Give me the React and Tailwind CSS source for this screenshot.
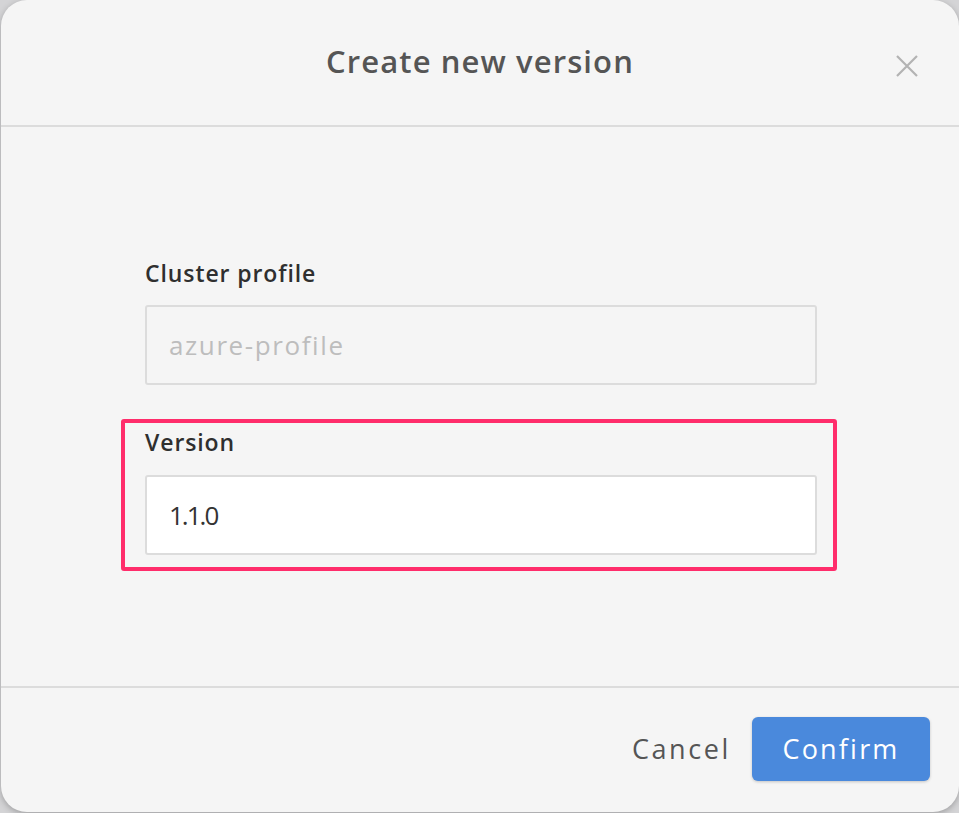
import React from "react";

export default function App() {
  return (
    <div
      className="w-[959px] h-[813px] bg-[#d4d4d6] overflow-hidden"
      style={{ fontFamily: '"Open Sans", "Noto Sans", sans-serif' }}
    >
      <div className="w-[958px] h-[812px] ml-[1px] bg-[#f5f5f5] rounded-[26px] shadow-[0_2px_6px_rgba(0,0,0,0.25)] flex flex-col overflow-hidden">
        {/* Header */}
        <div className="relative h-[127px] shrink-0 flex items-center justify-center border-b-2 border-[#dcdcdc]">
          <h1 className="text-[31px] font-semibold text-[#555555] tracking-[1.1px] -mt-[3px]">
            Create new version
          </h1>
          <button className="absolute right-[40px] top-[54px] w-[24px] h-[24px] flex items-center justify-center">
            <svg width="24" height="24" viewBox="0 0 24 24" fill="none">
              <path d="M2 2 L22 22 M22 2 L2 22" stroke="#b3b3b3" strokeWidth="2.2" strokeLinecap="butt" />
            </svg>
          </button>
        </div>

        {/* Body */}
        <div className="flex-1 flex flex-col">
          <div className="w-[672px] ml-[144px] pt-[131px] flex flex-col">
            <label className="text-[23px] font-semibold text-[#2f2f2f] leading-[30px] tracking-[0.9px]">
              Cluster profile
            </label>
            <div className="mt-[17px] h-[80px] border-2 border-[#dcdcdc] rounded-[3px] flex items-center pl-[22px]">
              <span className="text-[26px] text-[#bdbdbd] tracking-[1.6px]">azure-profile</span>
            </div>

            <div className="mt-[34px] -ml-[24px] -mr-[20px] border-[4px] border-[#ff2d6b] rounded-[3px] pl-[20px] pr-[16px] pt-[4px] pb-[12px] flex flex-col">
              <label className="text-[23px] font-semibold text-[#2f2f2f] leading-[30px] tracking-[0.9px]">
                Version
              </label>
              <div className="mt-[18px] h-[80px] bg-white border-2 border-[#dcdcdc] rounded-[3px] flex items-center pl-[22px]">
                <span className="text-[26px] text-[#333333] tracking-[-2px]">1.1.0</span>
              </div>
            </div>
          </div>
        </div>

        {/* Footer */}
        <div className="h-[126px] shrink-0 border-t-2 border-[#dcdcdc] flex items-start justify-end pr-[29px] pt-[29px]">
          <button className="h-[64px] mr-[21px] text-[27px] text-[#555555] tracking-[2.6px]">
            Cancel
          </button>
          <button className="h-[64px] w-[178px] bg-[#4a89dc] rounded-[6px] text-white text-[27px] tracking-[2.2px] shadow-[0_1px_3px_rgba(0,0,0,0.2)]">
            Confirm
          </button>
        </div>
      </div>
    </div>
  );
}
